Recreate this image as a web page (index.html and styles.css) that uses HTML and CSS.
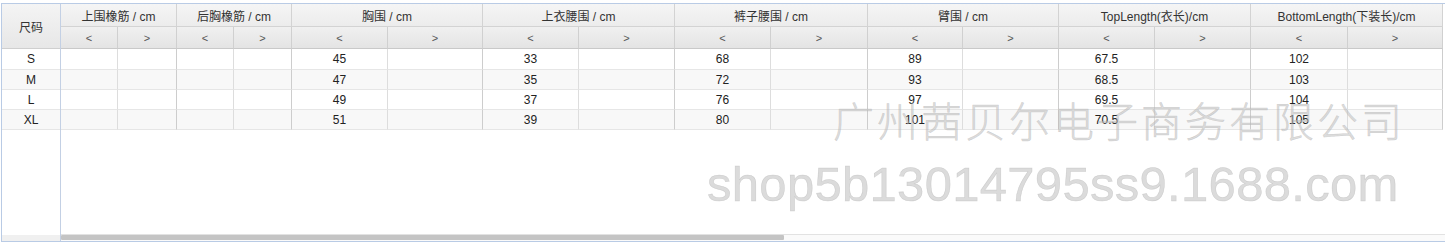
FILE: index.html
```html
<!DOCTYPE html>
<html lang="zh-CN">
<head>
<meta charset="utf-8">
<title>尺码表</title>
<link rel="stylesheet" href="styles.css">
</head>
<body>
<div class="sheet">
  <div class="frozen">
    <div class="f-head">尺码</div>
    <div class="f-cell r1">S</div>
    <div class="f-cell alt">M</div>
    <div class="f-cell">L</div>
    <div class="f-cell alt">XL</div>
    <div class="f-fill"></div>
    <div class="f-scroll"></div>
  </div>
  <div class="main">
    <div class="grid">
      <div class="h1 narrow">上围橡筋 / cm</div>
      <div class="h1 narrow">后胸橡筋 / cm</div>
      <div class="h1">胸围 / cm</div>
      <div class="h1">上衣腰围 / cm</div>
      <div class="h1">裤子腰围 / cm</div>
      <div class="h1">臂围 / cm</div>
      <div class="h1">TopLength(衣长)/cm</div>
      <div class="h1">BottomLength(下装长)/cm</div>

      <div class="h2 sub">&lt;</div><div class="h2">&gt;</div>
      <div class="h2 sub">&lt;</div><div class="h2">&gt;</div>
      <div class="h2 sub">&lt;</div><div class="h2">&gt;</div>
      <div class="h2 sub">&lt;</div><div class="h2">&gt;</div>
      <div class="h2 sub">&lt;</div><div class="h2">&gt;</div>
      <div class="h2 sub">&lt;</div><div class="h2">&gt;</div>
      <div class="h2 sub">&lt;</div><div class="h2">&gt;</div>
      <div class="h2 sub">&lt;</div><div class="h2">&gt;</div>

      <div class="c sub"></div><div class="c"></div>
      <div class="c sub"></div><div class="c"></div>
      <div class="c sub">45</div><div class="c"></div>
      <div class="c sub">33</div><div class="c"></div>
      <div class="c sub">68</div><div class="c"></div>
      <div class="c sub">89</div><div class="c"></div>
      <div class="c sub">67.5</div><div class="c"></div>
      <div class="c sub">102</div><div class="c"></div>

      <div class="c sub alt"></div><div class="c alt"></div>
      <div class="c sub alt"></div><div class="c alt"></div>
      <div class="c sub alt">47</div><div class="c alt"></div>
      <div class="c sub alt">35</div><div class="c alt"></div>
      <div class="c sub alt">72</div><div class="c alt"></div>
      <div class="c sub alt">93</div><div class="c alt"></div>
      <div class="c sub alt">68.5</div><div class="c alt"></div>
      <div class="c sub alt">103</div><div class="c alt"></div>

      <div class="c sub"></div><div class="c"></div>
      <div class="c sub"></div><div class="c"></div>
      <div class="c sub">49</div><div class="c"></div>
      <div class="c sub">37</div><div class="c"></div>
      <div class="c sub">76</div><div class="c"></div>
      <div class="c sub">97</div><div class="c"></div>
      <div class="c sub">69.5</div><div class="c"></div>
      <div class="c sub">104</div><div class="c"></div>

      <div class="c sub alt"></div><div class="c alt"></div>
      <div class="c sub alt"></div><div class="c alt"></div>
      <div class="c sub alt">51</div><div class="c alt"></div>
      <div class="c sub alt">39</div><div class="c alt"></div>
      <div class="c sub alt">80</div><div class="c alt"></div>
      <div class="c sub alt">101</div><div class="c alt"></div>
      <div class="c sub alt">70.5</div><div class="c alt"></div>
      <div class="c sub alt">105</div><div class="c alt"></div>
    </div>
    <div class="fill"></div>
    <div class="hscroll"><div class="thumb"></div></div>
  </div>
  <div class="watermark wm-cn">广州茜贝尔电子商务有限公司</div>
  <div class="watermark wm-url">shop5b13014795ss9.1688.com</div>
</div>
</body>
</html>
```

FILE: styles.css
```css
html, body {
  margin: 0;
  padding: 0;
  background: #ffffff;
}

body {
  font-family: "Liberation Sans", "Noto Sans CJK SC", sans-serif;
  font-size: 12px;
  color: #222222;
}

.sheet {
  position: relative;
  box-sizing: border-box;
  margin: 3px 0 0 1px;
  width: 1444px;
  height: 239px;
  border: 1px solid #b9cbe5;
  border-right: none;
  display: flex;
  overflow: hidden;
}

/* frozen first column */
.frozen {
  box-sizing: border-box;
  width: 59px;
  flex: none;
  border-right: 1px solid #c3d0e4;
  display: flex;
  flex-direction: column;
}

.f-head {
  box-sizing: border-box;
  height: 45px;
  border-bottom: 1px solid #cfcfcf;
  background: linear-gradient(#f4f4f4, #e7e7e7);
  display: flex;
  align-items: center;
  justify-content: center;
  color: #333333;
}

.f-cell {
  box-sizing: border-box;
  height: 20px;
  border-bottom: 1px solid #e6e6e6;
  display: flex;
  align-items: center;
  justify-content: center;
  background: #ffffff;
}

.f-cell.r1 {
  height: 21px;
}

.f-cell.alt {
  background: #f8f8f8;
}

.f-fill {
  flex: 1;
  background: #ffffff;
}

.f-scroll {
  height: 6px;
  background: #f0f0f0;
}

/* main scrollable area */
.main {
  flex: 1;
  display: flex;
  flex-direction: column;
  min-width: 0;
}

.grid {
  display: grid;
  grid-template-columns: 57px 59px 57px 58px 96px 95px 96px 96px 96px 97px 95px 96px 96px 96px 97px 95px;
  grid-template-rows: 23px 22px 21px 20px 20px 20px;
  width: 1382px;
}

.grid > div {
  box-sizing: border-box;
  display: flex;
  align-items: center;
  justify-content: center;
  white-space: nowrap;
}

.h1 {
  grid-column: span 2;
  border-right: 1px solid #d3d3d3;
  border-bottom: 1px solid #d3d3d3;
  background: linear-gradient(#f5f5f5, #ececec);
  color: #333333;
}

.h2 {
  border-right: 1px solid #d0d0d0;
  border-bottom: 1px solid #c9c9c9;
  background: linear-gradient(#f0f0f0, #e4e4e4);
  color: #555555;
  font-size: 11px;
}

.c {
  border-right: 1px solid #cdcdcd;
  border-bottom: 1px solid #e6e6e6;
  background: #ffffff;
}

.c.sub {
  border-right-color: #dddddd;
}

.c.alt {
  background: #f8f8f8;
}

.fill {
  flex: 1;
}

.hscroll {
  height: 7px;
  box-sizing: border-box;
  border-top: 1px solid #e2e2e2;
  background: #fafafa;
  display: flex;
  align-items: flex-start;
}

.thumb {
  width: 723px;
  height: 5px;
  background: #c4c4c4;
  border-radius: 1px;
}

/* watermark overlay */
.watermark {
  position: absolute;
  pointer-events: none;
  white-space: nowrap;
  line-height: 1;
  color: rgba(190, 190, 190, 0.55);
  -webkit-text-stroke: 0.5px rgba(170, 170, 170, 0.45);
}

.wm-cn {
  left: 831px;
  top: 95px;
  font-family: "Noto Sans CJK SC", sans-serif;
  font-size: 41px;
  font-weight: 300;
  letter-spacing: 3px;
}

.wm-url {
  left: 705px;
  top: 156px;
  font-family: "Liberation Sans", sans-serif;
  font-size: 49px;
  letter-spacing: 0.3px;
}
```
